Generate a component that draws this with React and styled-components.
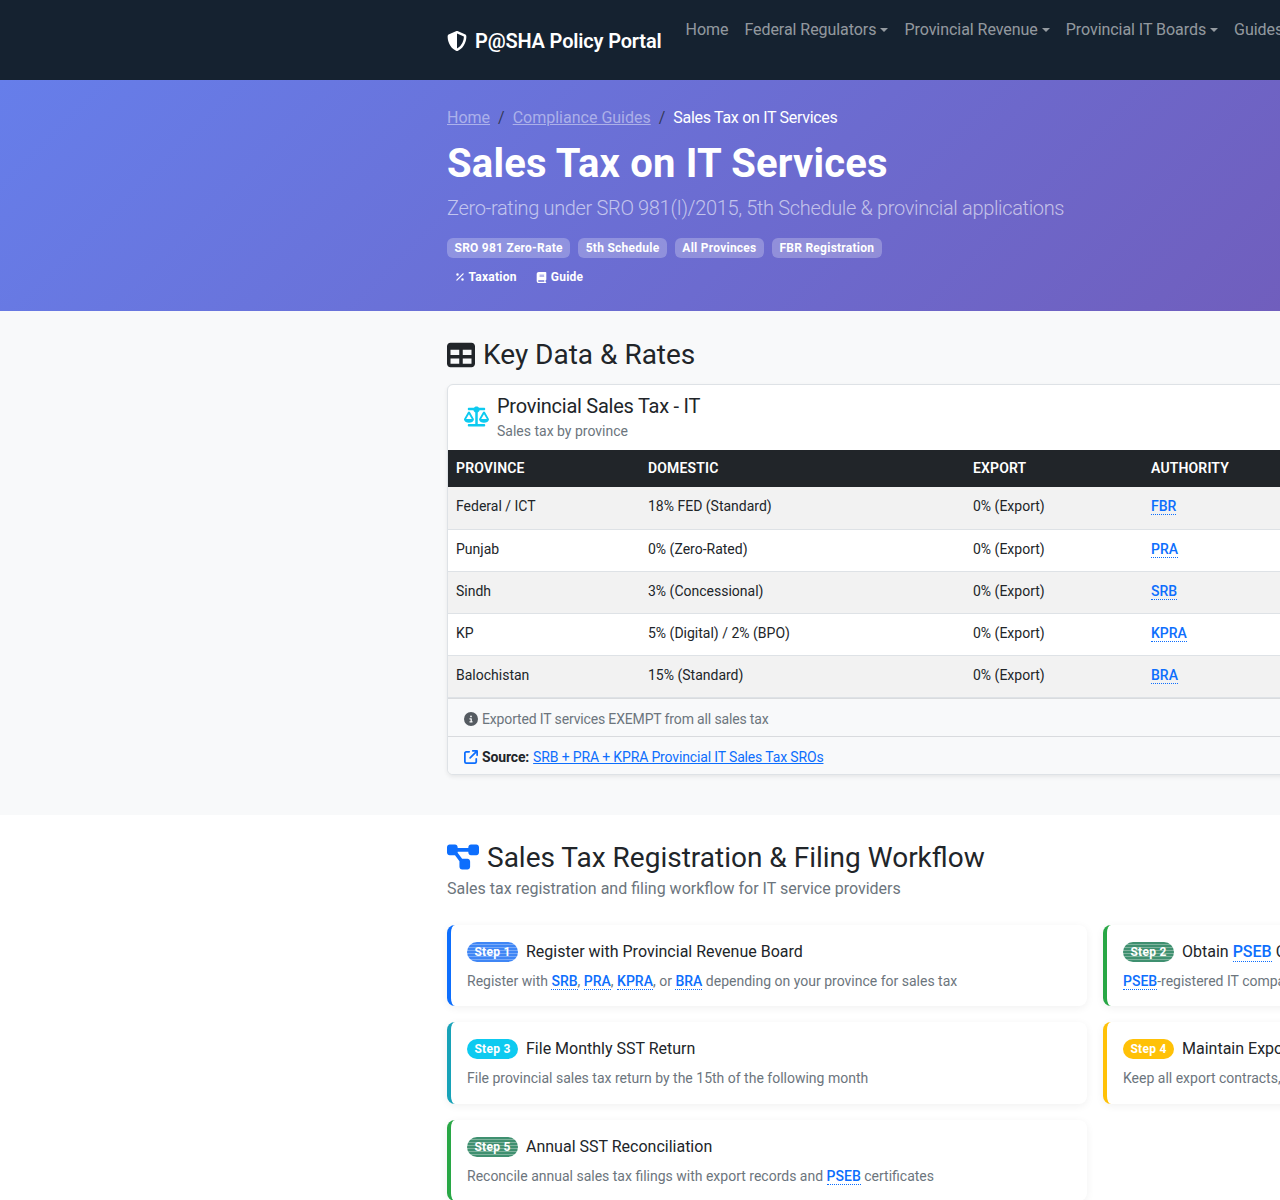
import React from 'react';
import styled, { createGlobalStyle } from 'styled-components';
import {
  FaArrowUpRightFromSquare,
  FaBook,
  FaCircleInfo,
  FaDiagramProject,
  FaPercent,
  FaScaleBalanced,
  FaShieldHalved,
  FaTable,
} from 'react-icons/fa6';

const GlobalStyle = createGlobalStyle`
  html, body {
    margin: 0;
    overflow-x: hidden;
  }

  body {
    font-family: Roboto, "Open Sans", sans-serif;
    font-size: 16px;
    line-height: 1.5;
    color: #212529;
    background: #fff;
  }

  * {
    box-sizing: border-box;
  }
`;

// the page was laid out wider than the window, so it is cut off on the right
const Page = styled.div`
  width: 2190px;
`;

const Container = styled.div`
  width: 1320px;
  margin: 0 auto;
  padding: 0 12px;
`;

const Navbar = styled.nav`
  height: 80px;
  background: #152230;
`;

const NavInner = styled(Container)`
  display: flex;
  align-items: flex-start;
`;

const Brand = styled.a`
  display: flex;
  align-items: center;
  gap: 8px;
  height: 30px;
  margin-top: 26px;
  margin-right: 16px;
  color: #fff;
  font-size: 20px;
  font-weight: 600;
  letter-spacing: -0.17px;
  white-space: nowrap;
`;

const NavList = styled.ul`
  display: flex;
  margin: 0;
  padding: 6px 0 0;
  list-style: none;
`;

const NavLink = styled.li`
  padding: 8px;
  color: rgba(255, 255, 255, 0.55);
  white-space: nowrap;
  font-size: 16px;
  letter-spacing: -0.05px;
  line-height: 32px;
  height: 48px;

  ${(p) =>
    p.$caret &&
    `&::after {
      content: "";
      display: inline-block;
      margin-left: 4px;
      vertical-align: 3px;
      border-top: 4.8px solid;
      border-right: 4.8px solid transparent;
      border-left: 4.8px solid transparent;
    }`}
`;

const Hero = styled.header`
  height: 231px;
  padding-top: 26px;
  color: #fff;
  background: linear-gradient(135deg, #667eea 0%, #764ba2 100%);
`;

const Breadcrumb = styled.div`
  display: flex;
  height: 24px;
  margin-bottom: 10px;
  font-size: 16px;
  color: #fff;
`;

const CrumbLink = styled.a`
  color: rgba(255, 255, 255, 0.45);
  text-decoration: underline;
`;

const CrumbSep = styled.span`
  padding: 0 8px;
  color: rgba(33, 37, 41, 0.75);
`;

const CrumbCurrent = styled.span`
  letter-spacing: -0.3px;
`;

const Title = styled.h1`
  margin: 0 0 5px;
  font-size: 40px;
  line-height: 48px;
  font-weight: 700;
  letter-spacing: 0.2px;
`;

const Lead = styled.p`
  margin: 0 0 15px;
  font-size: 20px;
  line-height: 30px;
  font-weight: 300;
  letter-spacing: -0.34px;
  color: rgba(255, 255, 255, 0.6);
`;

const TagRow = styled.div`
  display: flex;
  gap: ${(p) => p.$gap || 8}px;
  margin-bottom: 9px;
`;

const Tag = styled.span`
  display: inline-flex;
  align-items: center;
  gap: 4px;
  height: 20px;
  padding: 0 7.5px;
  border-radius: 6px;
  font-size: 12px;
  font-weight: 700;
  letter-spacing: 0.25px;
  color: #fff;
  background: ${(p) => (p.$plain ? 'transparent' : 'rgba(255, 255, 255, 0.25)')};
`;

const Section = styled.section`
  padding: ${(p) => (p.$light ? 27 : 26)}px 0 40px;
  background: ${(p) => (p.$light ? '#f8f9fa' : '#fff')};
`;

const SectionHeading = styled.h2`
  display: flex;
  align-items: center;
  gap: 8px;
  height: 34px;
  margin: 0 0 12px;
  font-size: 28px;
  line-height: 34px;
  font-weight: 400;
  color: #212529;
`;

const SectionIcon = styled.span`
  display: inline-flex;
  font-size: ${(p) => p.$size || 28}px;
  margin-bottom: ${(p) => p.$lift || 0}px;
  color: ${(p) => p.$color || '#212529'};
`;

const SectionNote = styled.p`
  margin: -10px 0 24px;
  color: #6c757d;
  font-size: 16px;
`;

const Card = styled.div`
  border: 1px solid #dee2e6;
  border-radius: 6px;
  background: #fff;
  overflow: hidden;
  box-shadow: 0 2px 4px rgba(0, 0, 0, 0.075);
`;

const CardHead = styled.div`
  display: flex;
  align-items: center;
  gap: 8px;
  height: 65px;
  padding: 0 16px 2px;
`;

const CardTitle = styled.div`
  font-size: 20px;
  line-height: 26px;
  letter-spacing: -0.25px;
  color: #212529;
`;

const CardSub = styled.div`
  margin-top: 3px;
  font-size: 14px;
  line-height: 18px;
  color: #6c757d;
`;

const Table = styled.table`
  width: 100%;
  border-collapse: collapse;
  table-layout: fixed;
  font-size: 14px;
`;

const Th = styled.th`
  height: 37px;
  padding: 0 8px;
  text-align: left;
  font-size: 14px;
  font-weight: 600;
  letter-spacing: 0.15px;
  text-transform: uppercase;
  color: #fff;
  background: #212529;
`;

const Row = styled.tr`
  background: ${(p) => (p.$odd ? '#f2f2f2' : '#fff')};
`;

const Td = styled.td`
  height: 42px;
  padding: 0 8px 2px;
  border-bottom: 1px solid #dee2e6;
  color: #212529;
`;

const Term = styled.a`
  font-weight: 500;
  color: #0d6efd;
  text-decoration: none;
  border-bottom: 1px dotted #0d6efd;
`;

const CardFoot = styled.div`
  display: flex;
  align-items: center;
  gap: 4px;
  height: 38px;
  padding: 4px 16px 0;
  font-size: 14px;
  letter-spacing: -0.15px;
  color: #6c757d;
  background: #f8f9fa;
  border-top: 1px solid #d9dbde;
`;

const SourceLabel = styled.strong`
  font-weight: 700;
  color: #212529;
`;

const SourceLink = styled.a`
  color: #0d6efd;
  text-decoration: underline;
`;

const FootIcon = styled.span`
  display: inline-flex;
  font-size: 14px;
  color: ${(p) => p.$color};
`;

const StepGrid = styled.div`
  display: grid;
  grid-template-columns: 640px 640px;
  gap: 16px;
`;

const StepCard = styled.div`
  height: 81.5px;
  padding: 17px 16px 16px;
  border-left: 4px solid ${(p) => p.$accent};
  border-radius: 8px;
  background: #fff;
  box-shadow: 0 2px 8px rgba(0, 0, 0, 0.06);
`;

const StepHead = styled.div`
  display: flex;
  align-items: center;
  gap: 8px;
  height: 20px;
  margin-bottom: 9px;
  font-size: 16px;
  color: #212529;
  white-space: nowrap;
`;

const StepBadge = styled.span`
  display: inline-flex;
  align-items: center;
  justify-content: center;
  width: 51px;
  height: 20px;
  border-radius: 10px;
  font-size: 12px;
  font-weight: 700;
  letter-spacing: 0.25px;
  color: #fff;
  background: ${(p) =>
    p.$stripe
      ? `repeating-linear-gradient(180deg, ${p.$bg} 0 2px, ${p.$stripe} 2px 3px)`
      : p.$bg};
`;

const StepText = styled.p`
  margin: 0;
  font-size: 14px;
  line-height: 20px;
  color: #6c757d;
  white-space: nowrap;
`;

const rates = [
  ['Federal / ICT', '18% FED (Standard)', '0% (Export)', 'FBR'],
  ['Punjab', '0% (Zero-Rated)', '0% (Export)', 'PRA'],
  ['Sindh', '3% (Concessional)', '0% (Export)', 'SRB'],
  ['KP', '5% (Digital) / 2% (BPO)', '0% (Export)', 'KPRA'],
  ['Balochistan', '15% (Standard)', '0% (Export)', 'BRA'],
];

const BLUE = { $accent: '#0d6efd', $bg: '#3f86f5', $stripe: '#78a9f8' };
const GREEN = { $accent: '#28a745', $bg: '#3f9070', $stripe: '#7fb39d' };
const TEAL = { $accent: '#17a2b8', $bg: '#0dcaf0' };
const YELLOW = { $accent: '#ffc107', $bg: '#ffc107' };

function Step({ n, tone, title, children }) {
  const { $accent, $bg, $stripe } = tone;
  return (
    <StepCard $accent={$accent}>
      <StepHead>
        <StepBadge $bg={$bg} $stripe={$stripe}>
          Step {n}
        </StepBadge>
        <span>{title}</span>
      </StepHead>
      <StepText>{children}</StepText>
    </StepCard>
  );
}

export default function App() {
  return (
    <Page>
      <GlobalStyle />
      <Navbar>
        <NavInner>
          <Brand>
            <FaShieldHalved size={20} />
            P@SHA Policy Portal
          </Brand>
          <NavList>
            <NavLink>Home</NavLink>
            <NavLink $caret>Federal Regulators</NavLink>
            <NavLink $caret>Provincial Revenue</NavLink>
            <NavLink $caret>Provincial IT Boards</NavLink>
            <NavLink $caret>Guides</NavLink>
          </NavList>
        </NavInner>
      </Navbar>

      <Hero>
        <Container>
          <Breadcrumb>
            <CrumbLink>Home</CrumbLink>
            <CrumbSep>/</CrumbSep>
            <CrumbLink>Compliance Guides</CrumbLink>
            <CrumbSep>/</CrumbSep>
            <CrumbCurrent>Sales Tax on IT Services</CrumbCurrent>
          </Breadcrumb>
          <Title>Sales Tax on IT Services</Title>
          <Lead>Zero-rating under SRO 981(I)/2015, 5th Schedule &amp; provincial applications</Lead>
          <TagRow>
            <Tag>SRO 981 Zero-Rate</Tag>
            <Tag>5th Schedule</Tag>
            <Tag>All Provinces</Tag>
            <Tag>FBR Registration</Tag>
          </TagRow>
          <TagRow $gap={4}>
            <Tag $plain>
              <FaPercent size={10} />
              Taxation
            </Tag>
            <Tag $plain>
              <FaBook size={11} />
              Guide
            </Tag>
          </TagRow>
        </Container>
      </Hero>

      <Section $light>
        <Container>
          <SectionHeading>
            <SectionIcon>
              <FaTable />
            </SectionIcon>
            Key Data &amp; Rates
          </SectionHeading>
          <Card>
            <CardHead>
              <SectionIcon $size={25} $color="#0dcaf0">
                <FaScaleBalanced />
              </SectionIcon>
              <div>
                <CardTitle>Provincial Sales Tax - IT</CardTitle>
                <CardSub>Sales tax by province</CardSub>
              </div>
            </CardHead>
            <Table>
              <colgroup>
                <col width="192" />
                <col width="325" />
                <col width="178" />
                <col />
              </colgroup>
              <thead>
                <tr>
                  <Th>Province</Th>
                  <Th>Domestic</Th>
                  <Th>Export</Th>
                  <Th>Authority</Th>
                </tr>
              </thead>
              <tbody>
                {rates.map((r, i) => (
                  <Row key={r[0]} $odd={i % 2 === 0}>
                    <Td>{r[0]}</Td>
                    <Td>{r[1]}</Td>
                    <Td>{r[2]}</Td>
                    <Td>
                      <Term>{r[3]}</Term>
                    </Td>
                  </Row>
                ))}
              </tbody>
            </Table>
            <CardFoot>
              <FootIcon $color="#555b61">
                <FaCircleInfo />
              </FootIcon>
              Exported IT services EXEMPT from all sales tax
            </CardFoot>
            <CardFoot>
              <FootIcon $color="#0d6efd">
                <FaArrowUpRightFromSquare />
              </FootIcon>
              <SourceLabel>Source:</SourceLabel>
              <SourceLink>SRB + PRA + KPRA Provincial IT Sales Tax SROs</SourceLink>
            </CardFoot>
          </Card>
        </Container>
      </Section>

      <Section>
        <Container>
          <SectionHeading>
            <SectionIcon $size={32} $color="#0d6efd" $lift={2}>
              <FaDiagramProject />
            </SectionIcon>
            Sales Tax Registration &amp; Filing Workflow
          </SectionHeading>
          <SectionNote>Sales tax registration and filing workflow for IT service providers</SectionNote>
          <StepGrid>
            <Step n={1} tone={BLUE} title="Register with Provincial Revenue Board">
              Register with <Term>SRB</Term>, <Term>PRA</Term>, <Term>KPRA</Term>, or <Term>BRA</Term>{' '}
              depending on your province for sales tax
            </Step>
            <Step
              n={2}
              tone={GREEN}
              title={
                <>
                  Obtain <Term>PSEB</Term> Certificate
                </>
              }
            >
              <Term>PSEB</Term>-registered IT companies qualify for zero-rating on exports
            </Step>
            <Step n={3} tone={TEAL} title="File Monthly SST Return">
              File provincial sales tax return by the 15th of the following month
            </Step>
            <Step n={4} tone={YELLOW} title="Maintain Export Documentation">
              Keep all export contracts, invoices and remittance records
            </Step>
            <Step n={5} tone={GREEN} title="Annual SST Reconciliation">
              Reconcile annual sales tax filings with export records and <Term>PSEB</Term> certificates
            </Step>
          </StepGrid>
        </Container>
      </Section>
    </Page>
  );
}
